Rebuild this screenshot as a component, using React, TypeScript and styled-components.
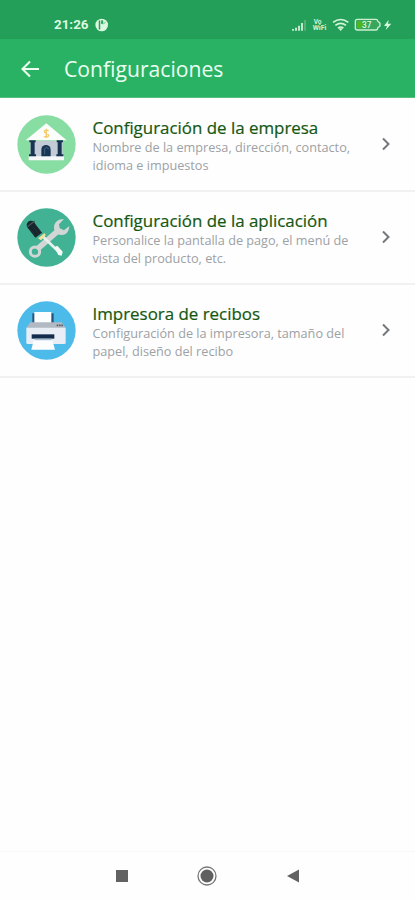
import React from "react";
import styled, { createGlobalStyle } from "styled-components";

const GlobalStyle = createGlobalStyle`
  * { box-sizing: border-box; }
  body { margin: 0; background: #fefefe; font-family: "Open Sans", "Noto Sans", sans-serif; }
`;

const Screen = styled.div`
  width: 415px;
  height: 900px;
  display: flex;
  flex-direction: column;
  background: #fefefe;
  overflow: hidden;
`;

const StatusBar = styled.header`
  height: 39px;
  flex: none;
  display: flex;
  align-items: center;
  padding: 10px 22px 0 54px;
  background: #239f59;
  color: #dcf8df;
`;

const Clock = styled.span`
  font: 700 13.4px/16px Roboto, sans-serif;
  width: 41px;
`;

const StatusIcons = styled.div`
  margin-left: auto;
  display: flex;
`;

const AppBar = styled.div`
  height: 59px;
  flex: none;
  display: flex;
  align-items: center;
  padding: 1px 21px 0;
  background: #29b263;
  border-bottom: 1px solid #57bd81;
  color: #ecfff1;
`;

const BackButton = styled.button`
  width: 43px;
  padding: 0;
  border: 0;
  background: none;
  color: inherit;
  display: flex;
`;

const Heading = styled.h1`
  margin: 0;
  padding-top: 1px;
  font-size: 21.15px;
  line-height: 30px;
  font-weight: 400;
  white-space: nowrap;
`;

const List = styled.main`
  flex: 1;
  padding-top: 1px;
`;

const Row = styled.section`
  height: 93px;
  display: flex;
  align-items: flex-start;
  padding: 16px 23px 0 17px;
  border-bottom: 2px solid #f1f1f1;
`;

const Picture = styled.svg`
  width: 59px;
  height: 59px;
  flex: none;
  margin-right: 16.5px;
`;

const Copy = styled.div`
  flex: 1;
  padding-top: 2px;
  white-space: nowrap;
`;

const Title = styled.h2`
  margin: 0;
  font-size: 16.9px;
  line-height: 22px;
  font-weight: 400;
  color: #155711;
  -webkit-text-stroke: 0.2px #155711;
`;

const Description = styled.p`
  margin: 0;
  font-size: 12.68px;
  line-height: 17.5px;
  color: #9da1a5;
`;

const Chevron = styled.svg`
  width: 12px;
  height: 16px;
  margin-top: 21px;
  flex: none;
`;

const NavBar = styled.nav`
  height: 49px;
  flex: none;
  display: flex;
  justify-content: center;
  align-items: center;
  gap: 65.5px;
  padding-right: 1px;
  border-top: 1px solid #f7f7f7;
`;

const BankArt = () => (
  <Picture viewBox="22 27 177 177">
    <circle cx="110.500" cy="115.500" r="87.500" fill="#88dda2" />
    <path d="M62 105H159V153H62Z" fill="#c3cbd7" />
    <path d="M48 103 110 52 171 103Z" fill="#fbfefc" />
    <path d="M57 151H163V163H57Z" fill="#f4f8f8" />
    <path d="M59 103H78V109H75V145H79V151H58V145H63V109H59ZM141 103H160V109H156V145H161V151H140V145H144V109H141Z" fill="#173552" />
    <path d="M95 151V131a14 14 0 0 1 28 0V151Z" fill="#183754" />
    <path d="M105 145V129q6-10 12 1" fill="none" stroke="#4b718b" strokeWidth="2.500" />
    <path d="M117 74q-12-5-13 3c0 6 13 4 13 11 0 7-11 6-14 3M110 68v28" fill="none" stroke="#f5ca70" strokeWidth="4" />
  </Picture>
);

const ToolsArt = () => (
  <Picture viewBox="22 27 177 177">
    <circle cx="110.500" cy="115.500" r="87.500" fill="#41b294" />
    <path d="M82 151 150 91" stroke="#d2d7d6" strokeWidth="17" />
    <circle cx="76" cy="158" r="14" fill="none" stroke="#d2d7d6" strokeWidth="9" />
    <path d="M163 60C146 60 133 70 133 85C133 100 143 109 157 108C171 107 178 97 179 81L163 94L150 88L148 76Z" fill="#d2d7d6" />
    <path d="M98 111 147 158" stroke="#e9efec" strokeWidth="8" />
    <path d="M134 145 143 140 159 158 156 170 146 168Z" fill="#f6faf6" />
    <path d="M64 79 87 109" stroke="#17252d" strokeWidth="25" />
    <circle cx="64" cy="78" r="13" fill="#17252d" />
    <path d="M53 83 75 66" stroke="#48545a" strokeWidth="4" />
    <path d="M63 91 80 113M70 84 89 108M77 78 97 103" stroke="#28363d" strokeWidth="2" />
    <path d="M85 118 105 102 108 109 94 124Z" fill="#eee29c" />
  </Picture>
);

const PrinterArt = () => (
  <Picture viewBox="22 32 177 177">
    <circle cx="110.500" cy="120.500" r="87.500" fill="#4dbbea" />
    <path d="M68 69H132V102H68Z" fill="#28547a" />
    <path d="M74 65H125V102H74Z" fill="#fbfdff" />
    <path d="M62 96H156L168 113H50Z" fill="#b2b9c2" />
    <path d="M50 112H168V157a4 4 0 0 1-4 4H54a4 4 0 0 1-4-4Z" fill="#e9edf5" />
    <path d="M141 105H160" stroke="#59636e" strokeWidth="5" strokeDasharray="5 2" />
    <path d="M66 132H134V145H66Z" fill="#142d4d" />
    <path d="M75 145H126V153H75Z" fill="#a9bfd2" />
    <path d="M72 150H128L136 178H65Z" fill="#fcfdff" />
  </Picture>
);

const entries = [
  {
    title: "Configuración de la empresa",
    lines: ["Nombre de la empresa, dirección, contacto,", "idioma e impuestos"],
    Art: BankArt,
  },
  {
    title: "Configuración de la aplicación",
    lines: ["Personalice la pantalla de pago, el menú de", "vista del producto, etc."],
    Art: ToolsArt,
  },
  {
    title: "Impresora de recibos",
    lines: ["Configuración de la impresora, tamaño del", "papel, diseño del recibo"],
    Art: PrinterArt,
  },
];

export default function App() {
  return (
    <Screen>
      <GlobalStyle />
      <StatusBar>
        <Clock>21:26</Clock>
        <svg width="14" height="14" viewBox="0 0 14 14">
          <circle cx="6.700" cy="7" r="6.300" fill="#dcf8df" />
          <path d="M4.500 2.500v9" stroke="#239f59" strokeWidth="1.500" />
          <path d="M6.500 2.700h1.300v3H6.500zM8.500 5.800l2-1.500" fill="#239f59" stroke="#239f59" strokeWidth="0.700" />
        </svg>
        <StatusIcons>
          <svg width="102" height="18" viewBox="36 47 306 54">
            <path d="M42 91v-5M51 91V82M60 91V76M69 91V68" stroke="#c2e9c9" strokeWidth="6" />
            <path d="M78 91V59" stroke="#5fb57d" strokeWidth="5" />
            <g fill="#d0f2d5" fontFamily="Roboto, sans-serif" fontWeight="700">
              <text x="104" y="71" fontSize="20">Vo</text>
              <text x="101" y="90" fontSize="21">WiFi</text>
            </g>
            <path d="M162 66q23-17 46 0M169 75q16-12 32 0M177 83q8-6 16 0" fill="none" stroke="#d3f5d9" strokeWidth="5" />
            <path d="M178 84H192L185 92Z" fill="#d3f5d9" />
            <path d="M235 57H291q5 0 5 5l7 7v8l-7 6q0 6-5 6H235q-6 0-6-6V63q0-6 6-6Z" fill="#38a75d" stroke="#c9efce" strokeWidth="4" />
            <path d="M235 63H254V83H235Z" fill="#51b51d" />
            <text x="249" y="82" fill="#d9f7db" fontFamily="Roboto, sans-serif" fontSize="25" fontWeight="500">37</text>
            <path d="M329 58 315 77H324L320 89 337 70H327Z" fill="#d9f8df" />
          </svg>
        </StatusIcons>
      </StatusBar>
      <AppBar>
        <BackButton aria-label="Volver">
          <svg width="19" height="18" viewBox="0 0 19 18" fill="none" stroke="currentColor" strokeWidth="2.100">
            <path d="M18 9H2M9 1.500 1.500 9 9 16.500" />
          </svg>
        </BackButton>
        <Heading>Configuraciones</Heading>
      </AppBar>
      <List>
        {entries.map(({ title, lines, Art }) => (
          <Row key={title}>
            <Art />
            <Copy>
              <Title>{title}</Title>
              <Description>
                {lines[0]}<br />{lines[1]}
              </Description>
            </Copy>
            <Chevron viewBox="0 0 12 16">
              <path d="M3 2.500 8.500 8 3 13.500" fill="none" stroke="#74777b" strokeWidth="2" />
            </Chevron>
          </Row>
        ))}
      </List>
      <NavBar>
        <svg width="20" height="20" viewBox="0 0 20 20"><path d="M4 4H16V16H4Z" fill="#626262" /></svg>
        <svg width="20" height="20" viewBox="0 0 20 20">
          <circle cx="10" cy="10" r="9" fill="none" stroke="#777" strokeWidth="1.300" />
          <circle cx="10" cy="10" r="6.500" fill="#606060" />
        </svg>
        <svg width="20" height="20" viewBox="0 0 20 20"><path d="M4 10 16 3.500V16.500Z" fill="#626262" /></svg>
      </NavBar>
    </Screen>
  );
}
